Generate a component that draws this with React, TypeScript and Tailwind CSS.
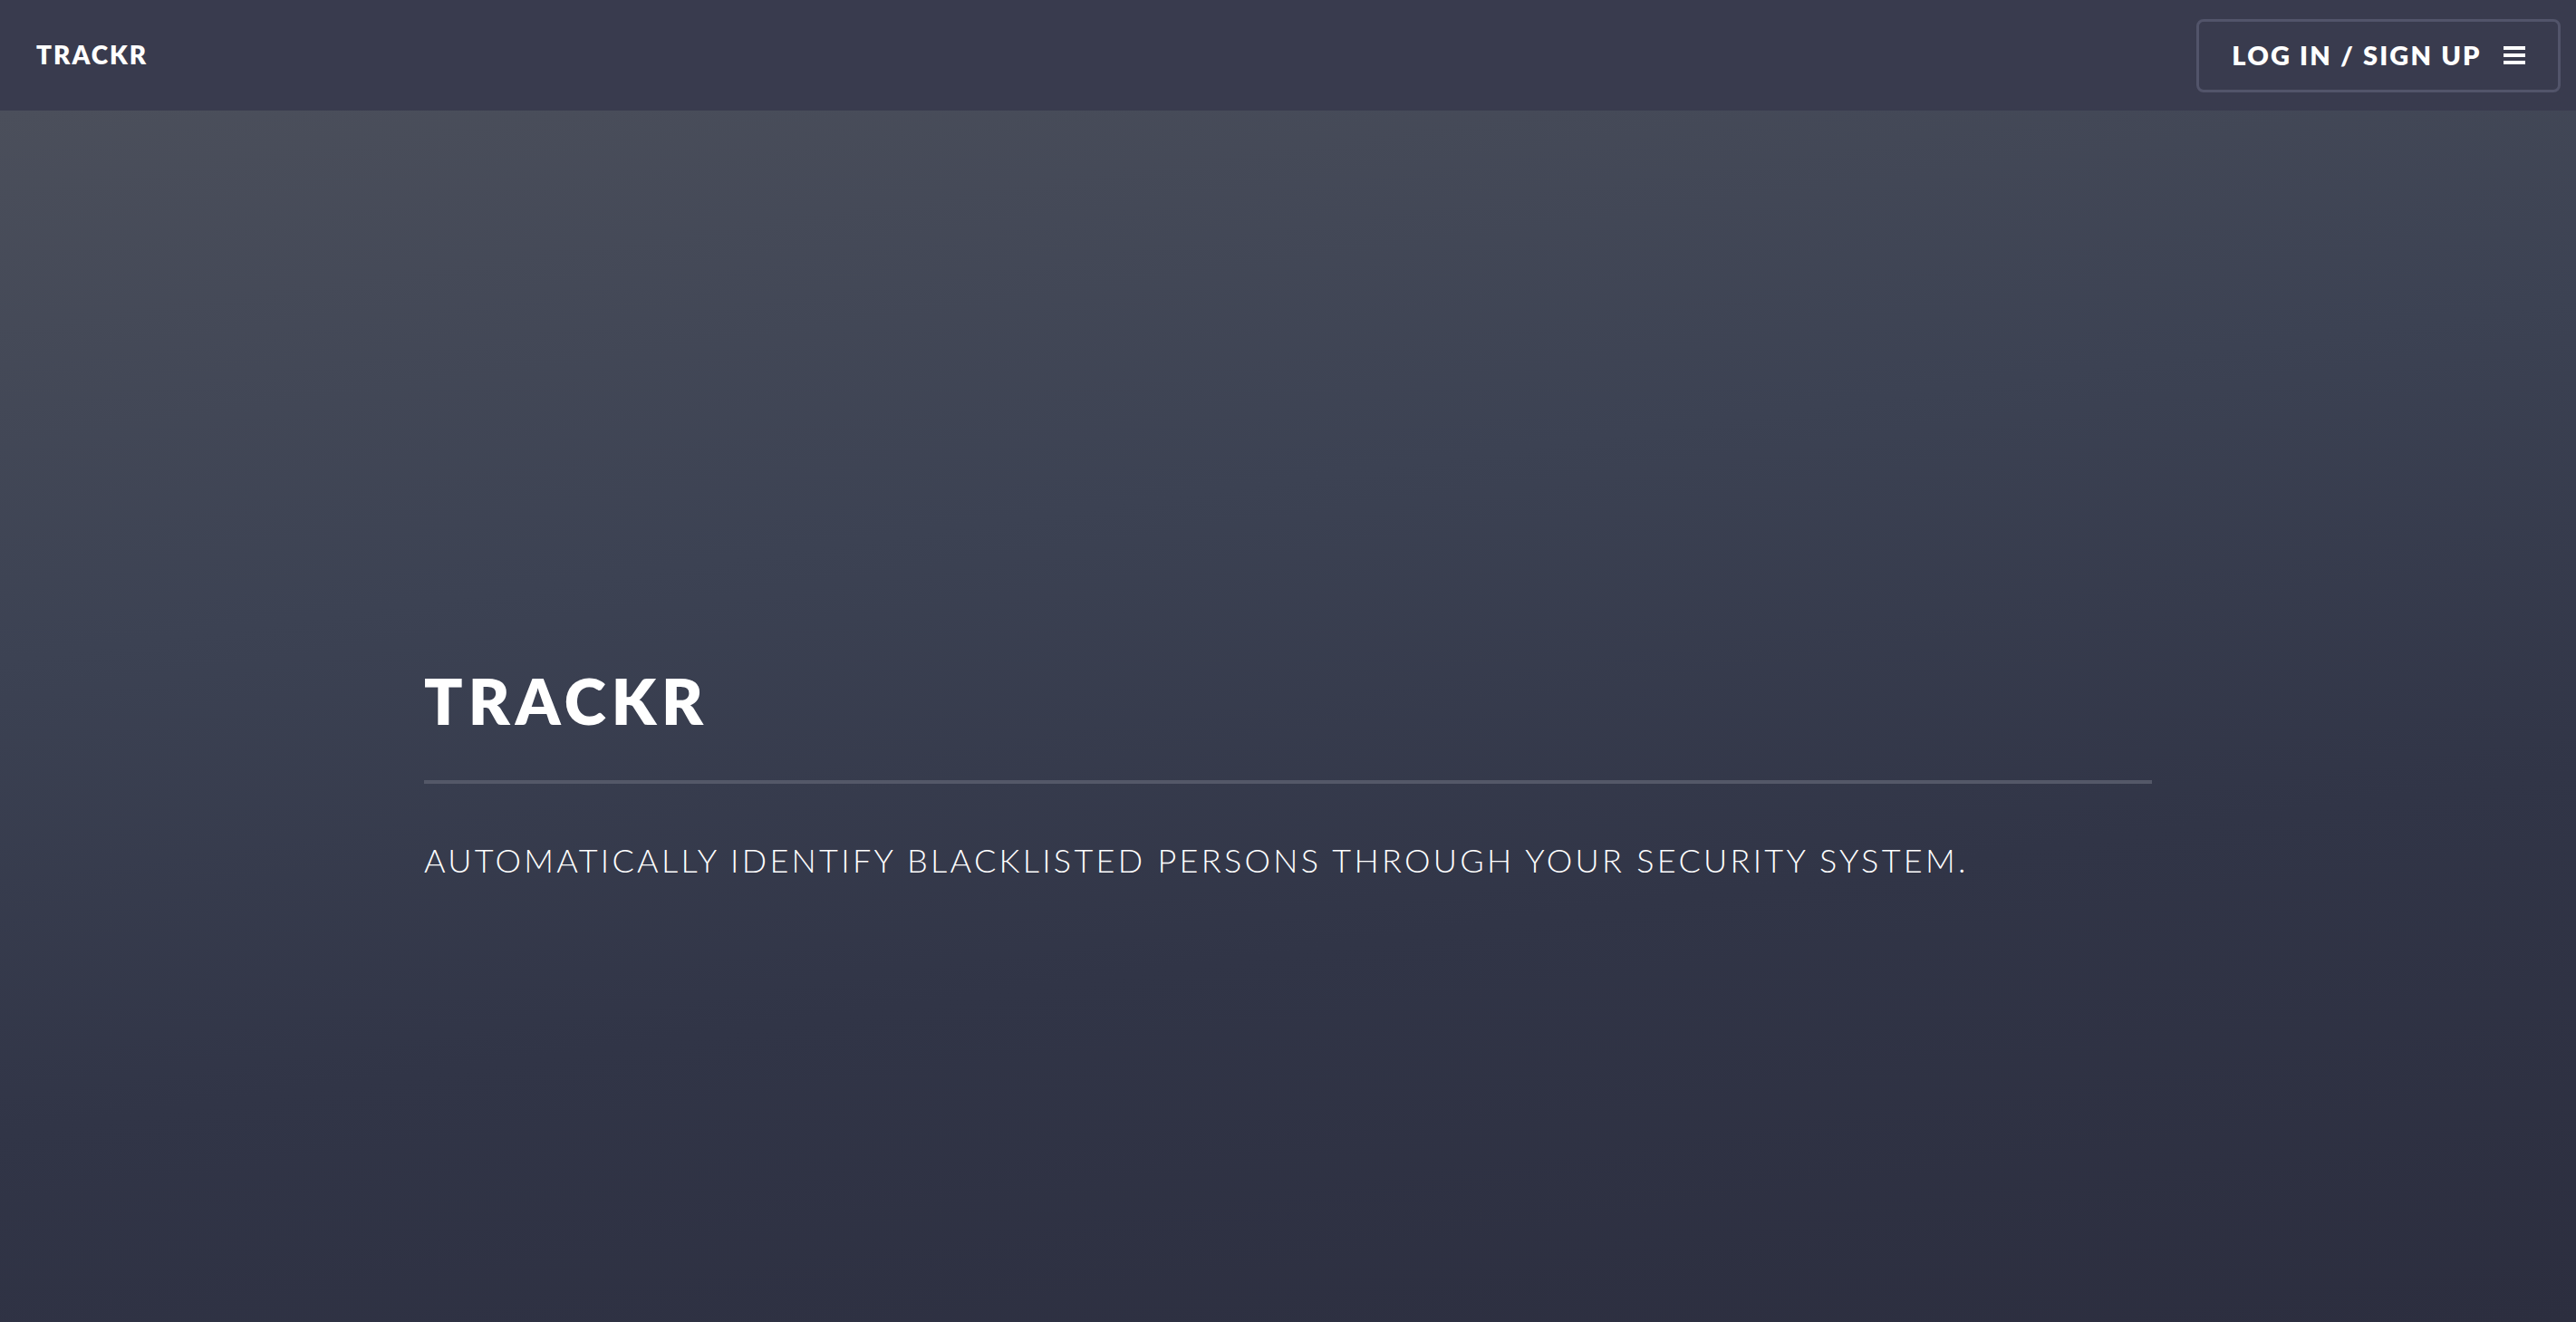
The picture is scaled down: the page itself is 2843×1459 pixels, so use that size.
import React from "react";

export default function App() {
  return (
    <div className="min-h-screen w-full flex flex-col font-['Lato',sans-serif] text-white">
      <header className="h-[122px] bg-[#393b4e] flex items-center justify-between pl-[40px] pr-[17px] shrink-0">
        <div className="text-[28px] font-extrabold tracking-[2px] leading-none -mt-[2px]">TRACKR</div>
        <button className="h-[81px] w-[402px] rounded-[8px] border-[3px] border-[#52546a] flex items-center justify-center gap-[24px] text-[29px] font-extrabold tracking-[2.2px] leading-none">
          <span className="-mt-[2px]">LOG IN / SIGN UP</span>
          <span className="flex flex-col gap-[4.5px] w-[24px]">
            <span className="block h-[3.5px] bg-white" />
            <span className="block h-[3.5px] bg-white" />
            <span className="block h-[3.5px] bg-white" />
          </span>
        </button>
      </header>
      <main className="h-[1337px] bg-[linear-gradient(172deg,#4b4f5b_0%,#3c4253_35%,#313547_65%,#2c2e3f_100%)]">
        <div className="mx-[468px] pt-[616px]">
          <h1 className="text-[70px] font-extrabold tracking-[6px] leading-none">TRACKR</h1>
          <div className="mt-[53px] h-[4px] bg-[#545868]" />
          <p className="mt-[66px] text-[36px] font-light tracking-[3.3px] leading-none">
            AUTOMATICALLY IDENTIFY BLACKLISTED PERSONS THROUGH YOUR SECURITY SYSTEM.
          </p>
        </div>
      </main>
    </div>
  );
}
